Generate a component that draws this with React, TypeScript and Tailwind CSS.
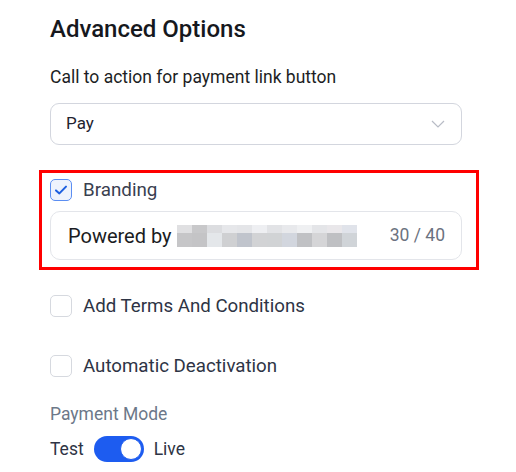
const blurTop = ["#e0e0e2", "#c8c8ca", "#dcdde0", "#e6e7ea", "#e4e5e8", "#eeeff2", "#e2e3e6", "#e8e9ec", "#eff0f2", "#e4e5e8", "#e9e7ea", "#e0e3ea"];
const blurBottom = ["#c6c6c8", "#c4c4c6", "#e4e7ea", "#cfd0d2", "#c0c4cc", "#d2d3d5", "#d1d3d5", "#d2d6de", "#c0c1c4", "#d5d5d7", "#bfc0c3", "#d0d4d8"];

const CheckIcon = () => (
    <svg width="16" height="16" viewBox="0 0 16 16" fill="none">
        <path d="M3 8.4 L6.4 11.4 L13 4.6" stroke="#1d5fe0" strokeWidth="2" strokeLinecap="round" strokeLinejoin="round" />
    </svg>
);

const Checkbox = ({ checked }: { checked?: boolean }) => (
    <span
        className={`flex items-center justify-center w-[22px] h-[22px] rounded-[5px] border ${checked
            ? "border-[#5b8ef2] bg-[#eef3fd]"
            : "border-[#d6d9df] bg-white"
            }`}
    >
        {checked && <CheckIcon />}
    </span>
);

export default function App() {
    return (
        <div className="w-[516px] h-[472px] bg-white px-[50px] pt-[13px] font-['Roboto',sans-serif] text-[#1f2330] overflow-hidden">
            <h2 className="text-[24px] leading-[32px] font-medium text-[#16181d]">Advanced Options</h2>

            <p className="mt-[20px] text-[17.5px] leading-[24px] text-[#1c1e24]">Call to action for payment link button</p>

            <div className="mt-[14px] w-[412px] h-[42px] flex items-center justify-between pl-[15px] pr-[16px] border border-[#d3d6de] rounded-[9px]">
                <span className="text-[17px] text-[#1f2330]">Pay</span>
                <svg width="14" height="8" viewBox="0 0 14 8" fill="none">
                    <path d="M1 1 L7 7 L13 1" stroke="#b8bcc6" strokeWidth="1.2" />
                </svg>
            </div>

            <div className="mt-[25px] ml-[-11px] w-[440px] border-[3px] border-[#ff0000] pl-[8px] pr-[14px] pt-[5px] pb-[7px]">
                <label className="flex items-center gap-[11px]">
                    <Checkbox checked />
                    <span className="text-[18.8px] leading-[24px] text-[#3a4050]">Branding</span>
                </label>
                <div className="mt-[9px] h-[49px] flex items-center justify-between pl-[17px] pr-[16px] border border-[#e3e5ea] rounded-[10px]">
                    <div className="flex items-center gap-[5px]">
                        <span className="text-[20px] text-[#1a1c22]">Powered by</span>
                        <div className="flex flex-col">
                            <div className="flex">
                                {blurTop.map((c, i) => (
                                    <span key={i} className="w-[15px] h-[8px]" style={{ backgroundColor: c }} />
                                ))}
                            </div>
                            <div className="flex">
                                {blurBottom.map((c, i) => (
                                    <span key={i} className="w-[15px] h-[14px]" style={{ backgroundColor: c }} />
                                ))}
                            </div>
                        </div>
                    </div>
                    <span className="text-[17.5px] text-[#6b7280]">30 / 40</span>
                </div>
            </div>

            <label className="mt-[24px] flex items-center gap-[11px]">
                <Checkbox />
                <span className="text-[18.7px] leading-[24px] text-[#2e3445]">Add Terms And Conditions</span>
            </label>

            <label className="mt-[36px] flex items-center gap-[11px]">
                <Checkbox />
                <span className="text-[18.7px] leading-[24px] text-[#2e3445]">Automatic Deactivation</span>
            </label>

            <p className="mt-[24px] text-[17.5px] leading-[24px] text-[#6c7889]">Payment Mode</p>

            <div className="mt-[10px] flex items-center gap-[10px]">
                <span className="text-[17.5px] text-[#2e3445]">Test</span>
                <span className="flex items-center justify-end w-[50px] h-[26px] rounded-full bg-[#1d5cf0] px-[2px]">
                    <span className="w-[22px] h-[22px] rounded-full bg-white border border-[#1d5cf0]" />
                </span>
                <span className="text-[17.5px] text-[#2e3445]">Live</span>
            </div>
        </div>
    );
}
